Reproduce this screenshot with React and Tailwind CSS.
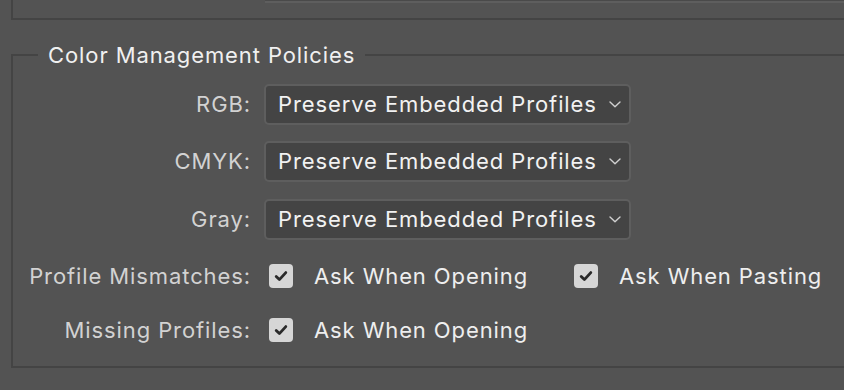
const font = { fontFamily: "Inter, 'Open Sans', sans-serif" };

const Select = ({ value }) => (
  <div className="flex items-center justify-between w-[367px] h-[41px] pl-[12px] pr-[8px] bg-[#444444] border-2 border-[#5e5e5e] rounded-[5px] text-[22px] tracking-[0.9px] text-[#f2f2f2]">
    <span>{value}</span>
    <svg width="12" height="7" viewBox="0 0 12 7" fill="none">
      <path d="M1 1 L6 5.8 L11 1" stroke="#d0d0d0" strokeWidth="1.4" strokeLinecap="round" strokeLinejoin="round" />
    </svg>
  </div>
);

const Check = ({ label, className = "" }) => (
  <div className={"flex items-center " + className}>
    <div className="flex items-center justify-center w-[24px] h-[24px] rounded-[4px] bg-[#d6d6d6]">
      <svg width="16" height="16" viewBox="0 0 16 16" fill="none">
        <path d="M3.2 8.4 L6.4 11.6 L12.8 4.6" stroke="#2a2a2a" strokeWidth="2.8" strokeLinecap="round" strokeLinejoin="round" />
      </svg>
    </div>
    <span className="ml-[21px] text-[22px] tracking-[0.9px] text-[#eeeeee]">{label}</span>
  </div>
);

const Label = ({ children }) => (
  <div className="w-[238px] text-right text-[22px] tracking-[0.9px] text-[#d2d2d2] shrink-0">{children}</div>
);

const App = () => {
  return (
    <div className="w-[844px] h-[390px] bg-[#535353] overflow-hidden" style={font}>
      {/* previous group (cut off at top) */}
      <div className="ml-[11px] h-[20px] border-l-2 border-b-2 border-[#444444]">
        <div className="ml-[252px] h-[3px] border-b-2 border-[#5e5e5e] bg-[#4a4a4a]" />
      </div>

      {/* Color Management Policies */}
      <fieldset className="mt-[22px] ml-[11px] w-[900px] h-[326px] border-2 border-[#444444]">
        <legend className="ml-[25px] px-[10px] text-[22px] tracking-[0.9px] leading-[26px] text-[#f0f0f0]">
          Color Management Policies
        </legend>

        <div className="flex flex-col pt-[16px]">
          <div className="flex items-center">
            <Label>RGB:</Label>
            <div className="ml-[13px]">
              <Select value="Preserve Embedded Profiles" />
            </div>
          </div>

          <div className="flex items-center mt-[16px]">
            <Label>CMYK:</Label>
            <div className="ml-[13px]">
              <Select value="Preserve Embedded Profiles" />
            </div>
          </div>

          <div className="flex items-center mt-[17px]">
            <Label>Gray:</Label>
            <div className="ml-[13px]">
              <Select value="Preserve Embedded Profiles" />
            </div>
          </div>

          <div className="flex items-center h-[30px] mt-[21px]">
            <Label>Profile Mismatches:</Label>
            <Check label="Ask When Opening" className="ml-[18px] w-[305px]" />
            <Check label="Ask When Pasting" />
          </div>

          <div className="flex items-center h-[30px] mt-[24px]">
            <Label>Missing Profiles:</Label>
            <Check label="Ask When Opening" className="ml-[18px]" />
          </div>
        </div>
      </fieldset>
    </div>
  );
};

export default App;
